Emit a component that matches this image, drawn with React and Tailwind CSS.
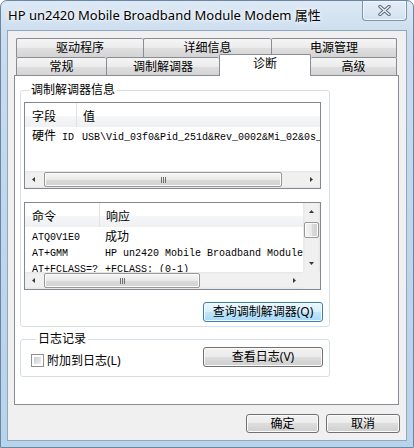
import React from 'react';

const ui = "font-['Noto_Sans','Noto_Sans_CJK_SC',sans-serif]";
const mono = "font-['Liberation_Mono','Noto_Sans_CJK_SC',monospace]";

const btn =
  "flex items-center justify-center rounded-[3px] border border-[#707070] bg-[linear-gradient(to_bottom,#f2f2f2_0%,#ebebeb_49%,#dddddd_50%,#cfcfcf_100%)] shadow-[inset_0_0_0_1px_#fbfbfb] text-[12px] leading-none text-black";
const btnBlue =
  "flex items-center justify-center rounded-[3px] border border-[#3c7fb1] bg-[linear-gradient(to_bottom,#eaf6fd_0%,#d9f0fc_49%,#bee6fd_50%,#a7d9f5_100%)] shadow-[inset_0_0_0_1px_#f4fbff] text-[12px] leading-none text-black";
const tabBg =
  "bg-[linear-gradient(to_bottom,#f5f5f5_0%,#ebebeb_50%,#dfdfdf_51%,#d4d4d4_100%)] border-[#898c95]";
const track =
  "bg-[linear-gradient(to_bottom,#e6e6e6_0%,#f0f0f0_15%,#f0f0f0_85%,#e6e6e6_100%)]";
const vtrack =
  "bg-[linear-gradient(to_right,#e6e6e6_0%,#f0f0f0_15%,#f0f0f0_85%,#e6e6e6_100%)]";
const thumbH =
  "rounded-[2px] border border-[#979797] bg-[linear-gradient(to_bottom,#f6f6f6_0%,#e9e9e9_50%,#dadada_51%,#d2d2d2_100%)] shadow-[inset_0_0_0_1px_#fbfbfb]";
const thumbV =
  "rounded-[2px] border border-[#979797] bg-[linear-gradient(to_right,#f6f6f6_0%,#e9e9e9_50%,#dadada_51%,#d2d2d2_100%)] shadow-[inset_0_0_0_1px_#fbfbfb]";

function Arrow({ dir }) {
  if (dir === 'left') return <svg width="3" height="5" viewBox="0 0 3 5"><polygon points="3,0 0,2.5 3,5" fill="#3a3a3a" /></svg>;
  if (dir === 'right') return <svg width="3" height="5" viewBox="0 0 3 5"><polygon points="0,0 3,2.5 0,5" fill="#3a3a3a" /></svg>;
  if (dir === 'up') return <svg width="5" height="3" viewBox="0 0 5 3"><polygon points="0,3 2.5,0 5,3" fill="#3a3a3a" /></svg>;
  return <svg width="5" height="3" viewBox="0 0 5 3"><polygon points="0,0 2.5,3 5,0" fill="#3a3a3a" /></svg>;
}

function Grip() {
  return (
    <div className="flex gap-[1px]">
      <div className="w-px h-[6px] bg-[#6e6e6e]" />
      <div className="w-px h-[6px] bg-[#6e6e6e]" />
      <div className="w-px h-[6px] bg-[#6e6e6e]" />
    </div>
  );
}

function HScroll({ width, thumb }) {
  return (
    <div className={`flex h-[17px] shrink-0 ${width} ${track}`}>
      <div className="w-[17px] flex items-center justify-center"><Arrow dir="left" /></div>
      <div className="flex-1 flex items-center">
        <div className={`ml-[2px] h-[15px] flex items-center justify-center ${thumb} ${thumbH}`}>
          <Grip />
        </div>
      </div>
      <div className="w-[17px] flex items-center justify-center"><Arrow dir="right" /></div>
    </div>
  );
}

function VScroll() {
  return (
    <div className={`w-[17px] flex flex-col shrink-0 ${vtrack}`}>
      <div className="h-[17px] flex items-center justify-center"><Arrow dir="up" /></div>
      <div className="flex-1">
        <div className={`mt-[2px] mx-[1px] h-[16px] ${thumbV}`} />
      </div>
      <div className="h-[17px] flex items-center justify-center"><Arrow dir="down" /></div>
    </div>
  );
}

function Header({ first, firstW, second }) {
  return (
    <div className="flex h-[24px] shrink-0 bg-[linear-gradient(to_bottom,#ffffff_0%,#ffffff_55%,#f5f6f7_56%,#eff0f2_100%)] text-[12px] leading-none">
      <div className={`${firstW} pl-[7px] pt-[3px] flex items-center border-r border-[#e2e3e5]`}>{first}</div>
      <div className="flex-1 pl-[6px] pt-[3px] flex items-center">{second}</div>
    </div>
  );
}

function Row({ a, b, firstW }) {
  return (
    <div className={`flex h-[16px] items-center whitespace-nowrap text-[10px] ${mono}`}>
      <div className={`${firstW} pl-[7px] shrink-0`}>{a}</div>
      <div className="pl-[6px]">{b}</div>
    </div>
  );
}

function Tab({ label, className }) {
  return (
    <div className={`flex items-center justify-center text-[12px] leading-none rounded-t-[2px] ${className}`}>
      {label}
    </div>
  );
}

export default function App() {
  return (
    <div className={`w-[414px] h-[448px] flex flex-col text-black ${ui} border border-[#6a86a3] rounded-t-[7px] bg-[linear-gradient(to_bottom,#dde9f5_0%,#cadcee_8%,#bed5ec_60%,#b8d3ec_100%)] overflow-hidden`}>
      {/* title bar */}
      <div className="h-[29px] flex items-start shrink-0">
        <div className="pl-[7px] pt-[6px] text-[13px] leading-[16px] [text-shadow:0_0_6px_#ffffff,0_0_3px_#ffffff]">
          HP un2420 Mobile Broadband Module Modem 属性
        </div>
        <div className="ml-auto mr-[6px] w-[45px] h-[20px] rounded-b-[4px] border border-t-0 border-[#7f95ad] bg-[linear-gradient(to_bottom,#e6eef7,#d2e1f0)] shadow-[inset_0_0_0_1px_#f1f6fb] flex items-center justify-center">
          <svg width="13" height="11" viewBox="0 0 13 11">
            <path d="M2 1.5 L11 9.5 M11 1.5 L2 9.5" stroke="#5b6b7d" strokeWidth="3.4" strokeLinecap="round" />
            <path d="M2 1.5 L11 9.5 M11 1.5 L2 9.5" stroke="#eef2f6" strokeWidth="1.4" strokeLinecap="round" />
          </svg>
        </div>
      </div>

      {/* client area */}
      <div className="mx-[6px] h-[411px] border border-[#91a7be] bg-[#f0f0f0] pt-[7px] flex flex-col">
        {/* tabs row 1 */}
        <div className="pl-[8px] flex h-[19px]">
          <Tab label="驱动程序" className={`w-[127px] border-t border-l ${tabBg}`} />
          <Tab label="详细信息" className={`w-[128px] border-t border-l ${tabBg}`} />
          <Tab label="电源管理" className={`w-[126px] border-t border-l border-r ${tabBg}`} />
        </div>
        {/* tabs row 2 */}
        <div className="pl-[8px] flex h-[22px] -mt-[3px] -mb-px relative z-10">
          <Tab label="常规" className={`mt-[3px] h-[18px] w-[90px] border-t border-l ${tabBg}`} />
          <Tab label="调制解调器" className={`mt-[3px] h-[18px] w-[113px] border-t border-l ${tabBg}`} />
          <Tab label="诊断" className="h-[22px] w-[92px] pb-[3px] border-t border-l border-r border-[#898c95] bg-white" />
          <Tab label="高级" className={`mt-[3px] h-[18px] w-[86px] border-t border-r ${tabBg}`} />
        </div>

        {/* panel */}
        <div className="ml-[6px] w-[385px] h-[330px] border border-[#898c95] bg-white flex flex-col">
          <fieldset className="ml-[5px] mt-[6px] w-[310px] border border-[#d5dfe5] rounded-[3px] pl-[3px] pr-[6px] pb-[4px]">
            <legend className="ml-[5px] px-[2px] text-[12px] leading-[16px]">调制解调器信息</legend>

            {/* list 1 */}
            <div className="mt-[4px] w-[297px] h-[87px] border border-[#828790] flex flex-col">
              <div className="flex-1 overflow-hidden">
                <Header first="字段" firstW="w-[52px]" second="值" />
                <div className="pt-[2px]">
                  <Row firstW="w-[51px]" a={<><span className="text-[12px]">硬件</span> ID</>} b={'USB\\Vid_03f0&Pid_251d&Rev_0002&Mi_02&0s_'} />
                </div>
              </div>
              <HScroll width="w-full" thumb="w-[238px]" />
            </div>

            {/* list 2 */}
            <div className="mt-[13px] w-[297px] h-[88px] border border-[#828790] flex flex-col">
              <div className="flex flex-1 min-h-0">
                <div className="flex-1 overflow-hidden">
                  <Header first="命令" firstW="w-[75px]" second="响应" />
                  <div className="pt-[2px]">
                    <Row firstW="w-[74px]" a="ATQ0V1E0" b={<span className={`text-[12px] ${ui}`}>成功</span>} />
                    <Row firstW="w-[74px]" a="AT+GMM" b="HP un2420 Mobile Broadband Module" />
                    <Row firstW="w-[74px]" a="AT+FCLASS=?" b="+FCLASS: (0-1)" />
                  </div>
                </div>
                <VScroll />
              </div>
              <div className="flex">
                <HScroll width="w-[278px]" thumb="w-[156px]" />
                <div className="flex-1 bg-[#f0f0f0]" />
              </div>
            </div>

            <div className="mt-[12px] flex justify-end">
              <button className={`w-[120px] h-[20px] ${btnBlue}`}>查询调制解调器(Q)</button>
            </div>
          </fieldset>

          <fieldset className="ml-[5px] mt-[4px] w-[310px] border border-[#d5dfe5] rounded-[3px] pl-[10px] pr-[6px] pb-[9px]">
            <legend className="ml-[5px] px-[2px] text-[12px] leading-[16px]">日志记录</legend>
            <div className="flex items-end">
              <div className="flex items-center h-[13px] gap-[3px]">
                <div className="w-[13px] h-[13px] border border-[#8e8f8f] bg-white p-[2px]">
                  <div className="w-full h-full bg-[linear-gradient(135deg,#c9cdd2,#eef0f2)]" />
                </div>
                <span className="text-[12px] leading-none">附加到日志(L)</span>
              </div>
              <button className={`ml-auto w-[120px] h-[20px] ${btn}`}>查看日志(V)</button>
            </div>
          </fieldset>
        </div>

        {/* dialog buttons */}
        <div className="mt-[9px] pr-[6px] flex justify-end gap-[7px]">
          <button className={`w-[73px] h-[19px] ${btn}`}>确定</button>
          <button className={`w-[74px] h-[19px] ${btn}`}>取消</button>
        </div>
      </div>
    </div>
  );
}
